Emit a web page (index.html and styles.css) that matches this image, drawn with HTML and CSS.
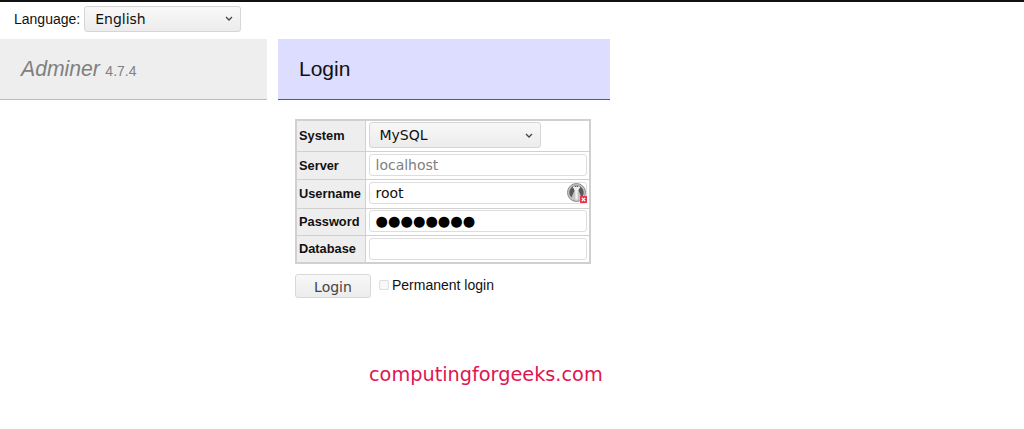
FILE: index.html
```html
<!DOCTYPE html>
<html lang="en">
<head>
<meta charset="utf-8">
<title>Login - Adminer</title>
<link rel="stylesheet" href="styles.css">
</head>
<body>
<div class="lang-row">
  <span class="lang-label">Language:</span>
  <div class="select lang-select"><span>English</span><svg class="chev" viewBox="0 0 8 5"><path d="M1 1l3 3 3-3" fill="none" stroke="#444" stroke-width="1.3"/></svg></div>
</div>
<div class="columns">
  <aside class="side">
    <div class="brand"><em class="brand-name">Adminer</em> <span class="version">4.7.4</span></div>
  </aside>
  <main class="content">
    <h2 class="title">Login</h2>
    <form class="login">
      <table class="grid">
        <tr class="r1"><th>System</th><td><div class="select sys-select"><span>MySQL</span><svg class="chev" viewBox="0 0 8 5"><path d="M1 1l3 3 3-3" fill="none" stroke="#444" stroke-width="1.3"/></svg></div></td></tr>
        <tr class="r2"><th>Server</th><td><div class="field ph">localhost</div></td></tr>
        <tr class="r3"><th>Username</th><td><div class="field raised">root
          <svg class="keyicon" viewBox="0 0 20 20">
            <circle cx="9.5" cy="9.5" r="9" fill="#c4c4c4" stroke="#8c8c8c" stroke-width="1"/>
            <path d="M9.5 2.5a7 7 0 0 0-5 12zM9.5 2.5a7 7 0 0 1 5 12z" fill="#5a5a5a"/>
            <path d="M9.5 4v12.5M6.6 3.5l2.9 4.5 2.9-4.5" stroke="#f0f0f0" stroke-width="2.3" fill="none"/>
            <rect x="13" y="13" width="7" height="7" fill="#e8354a"/>
            <path d="M14.8 14.8l3.4 3.4M18.2 14.8l-3.4 3.4" stroke="#fff" stroke-width="1.2"/>
          </svg></div></td></tr>
        <tr class="r4"><th>Password</th><td><div class="field raised dots">●●●●●●●●</div></td></tr>
        <tr class="r5"><th>Database</th><td><div class="field"></div></td></tr>
      </table>
      <div class="actions">
        <div class="btn">Login</div>
        <label class="perm"><span class="check"></span>Permanent login</label>
      </div>
    </form>
    <div class="watermark">computingforgeeks.com</div>
  </main>
</div>
</body>
</html>
```
FILE: styles.css
```css
* { box-sizing: border-box; }
html, body { margin: 0; height: 429px; overflow: hidden; background: #fff; }
body { border-top: 2px solid #111; font-family: "Liberation Sans", Arial, sans-serif; color: #000; }
.lang-row { display: flex; align-items: center; height: 30px; padding: 3px 0 0 14px; gap: 4px; font-size: 14px; }
.lang-label { color: #111; }
.select { display: flex; align-items: center; justify-content: space-between; height: 26px; border: 1px solid #d6d6d6; border-radius: 3px; background: linear-gradient(#f8f8f8, #ececec); font-family: "DejaVu Sans", sans-serif; font-size: 14px; color: #111; padding: 0 7px 0 10px; }
.chev { width: 8px; height: 5px; }
.lang-select { width: 157px; }
.columns { display: flex; align-items: flex-start; margin-top: 7px; }
.side { width: 267px; flex: none; }
.brand { height: 61px; background: #eee; border-bottom: 1px solid #bbb; padding: 18px 0 0 21px; color: #808080; white-space: nowrap; }
.brand-name { font-size: 21.2px; }
.version { font-size: 14px; margin-left: 1px; }
.content { width: 332px; margin-left: 11px; position: relative; }
.title { margin: 0; height: 61px; background: #ddf; border-bottom: 1px solid #5a5a7a; font-size: 21px; font-weight: normal; padding: 18px 0 0 21px; color: #111; }
.login { padding: 19px 0 0 17px; }
.grid { border-collapse: collapse; border: 2px solid #d0d0d0; width: 296px; table-layout: fixed; }
.grid th { width: 69px; background: #eee; border: 1px solid #d0d0d0; text-align: left; font-size: 12.8px; padding: 0 0 0 2px; color: #111; }
.grid td { border: 1px solid #d0d0d0; padding: 0 2px 0 3px; }
.r1 { height: 31px; } .r2 { height: 28px; } .r3 { height: 29px; } .r4 { height: 27px; } .r5 { height: 28px; }
.sys-select { width: 172px; margin-top: -1px; }
.field { height: 22px; border: 1px solid #ddd; border-radius: 3px; background: #fff; padding: 0 6px; font-family: "DejaVu Sans", sans-serif; font-size: 14px; line-height: 20px; color: #111; }
.raised { margin-top: -2px; }
.ph { color: #808080; }
.dots { font-size: 14.3px; letter-spacing: 0; color: #000; }
.field:has(.keyicon) { position: relative; }
.keyicon { position: absolute; right: -1px; top: 0; width: 20px; height: 20px; }
.actions { display: flex; align-items: flex-start; margin-top: 10px; }
.btn { width: 76px; height: 24px; border: 1px solid #d8d8d8; border-radius: 3px; background: linear-gradient(#f8f8f8, #ececec); font-family: "DejaVu Sans", sans-serif; font-size: 14px; line-height: 24px; text-align: center; color: #444; }
.perm { display: flex; align-items: center; font-size: 14px; margin-left: 8px; height: 22px; color: #111; }
.check { width: 10px; height: 10px; margin-right: 3px; border: 1px solid #ddd; border-radius: 2px; background: #f8f8f8; }
.watermark { position: absolute; left: 91px; top: 324px; font-family: "DejaVu Sans", sans-serif; font-size: 19.3px; color: #e0144f; white-space: nowrap; }
```
